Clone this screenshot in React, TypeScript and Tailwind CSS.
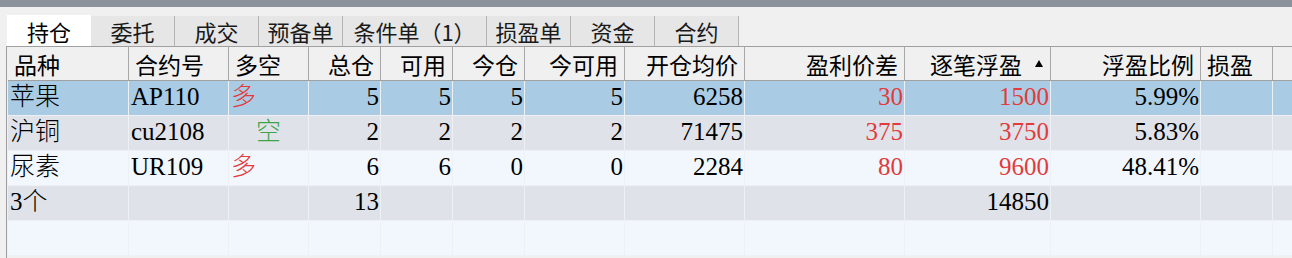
import React from "react";

type Align = "left" | "right" | "center";
const widths = [121, 100, 80, 72, 72, 72, 100, 120, 160, 146, 150, 72];
const headers: { t: string; a: Align; sort?: boolean }[] = [
  { t: "品种", a: "left" },
  { t: "合约号", a: "left" },
  { t: "多空", a: "left" },
  { t: "总仓", a: "right" },
  { t: "可用", a: "right" },
  { t: "今仓", a: "right" },
  { t: "今可用", a: "right" },
  { t: "开仓均价", a: "right" },
  { t: "盈利价差", a: "right" },
  { t: "逐笔浮盈", a: "right", sort: true },
  { t: "浮盈比例", a: "right" },
  { t: "损盈", a: "left" },
];

type Cell = { t: string; a: Align; c?: string };
const R = "text-[#e23b3b]";
const G = "text-[#3fa447]";

const rows: { bg: string; cells: Cell[] }[] = [
  {
    bg: "bg-[#a9cce4]",
    cells: [
      { t: "苹果", a: "left" },
      { t: "AP110", a: "left" },
      { t: "多", a: "left", c: R },
      { t: "5", a: "right" },
      { t: "5", a: "right" },
      { t: "5", a: "right" },
      { t: "5", a: "right" },
      { t: "6258", a: "right" },
      { t: "30", a: "right", c: R },
      { t: "1500", a: "right", c: R },
      { t: "5.99%", a: "right" },
      { t: "", a: "left" },
    ],
  },
  {
    bg: "bg-[#dfe3e9]",
    cells: [
      { t: "沪铜", a: "left" },
      { t: "cu2108", a: "left" },
      { t: "空", a: "center", c: G },
      { t: "2", a: "right" },
      { t: "2", a: "right" },
      { t: "2", a: "right" },
      { t: "2", a: "right" },
      { t: "71475", a: "right" },
      { t: "375", a: "right", c: R },
      { t: "3750", a: "right", c: R },
      { t: "5.83%", a: "right" },
      { t: "", a: "left" },
    ],
  },
  {
    bg: "bg-[#f2f7fd]",
    cells: [
      { t: "尿素", a: "left" },
      { t: "UR109", a: "left" },
      { t: "多", a: "left", c: R },
      { t: "6", a: "right" },
      { t: "6", a: "right" },
      { t: "0", a: "right" },
      { t: "0", a: "right" },
      { t: "2284", a: "right" },
      { t: "80", a: "right", c: R },
      { t: "9600", a: "right", c: R },
      { t: "48.41%", a: "right" },
      { t: "", a: "left" },
    ],
  },
  {
    bg: "bg-[#dfe3e9]",
    cells: [
      { t: "3个", a: "left" },
      { t: "", a: "left" },
      { t: "", a: "left" },
      { t: "13", a: "right" },
      { t: "", a: "left" },
      { t: "", a: "left" },
      { t: "", a: "left" },
      { t: "", a: "left" },
      { t: "", a: "left" },
      { t: "14850", a: "right" },
      { t: "", a: "left" },
      { t: "", a: "left" },
    ],
  },
  {
    bg: "bg-[#f2f7fd]",
    cells: widths.map(() => ({ t: "", a: "left" as Align })),
  },
];

const tabs = [
  { t: "持仓", w: 84 },
  { t: "委托", w: 84 },
  { t: "成交", w: 84 },
  { t: "预备单", w: 84 },
  { t: "条件单（1）", w: 144 },
  { t: "损盈单", w: 84 },
  { t: "资金", w: 84 },
  { t: "合约", w: 84 },
];

const sans = { fontFamily: '"Noto Sans CJK SC", "Noto Sans", sans-serif' };
const serif = { fontFamily: '"Liberation Serif", "Times New Roman", "Noto Sans CJK SC", serif' };

export default function App() {
  return (
    <div className="w-[1292px] h-[258px] overflow-hidden bg-[#f0f0f0] flex flex-col">
      <div className="h-[7px] bg-[#8b929b] shrink-0" />
      <div className="flex pl-[7px] pt-[8px] h-[39px] shrink-0 items-end" style={sans}>
        {tabs.map((tab, i) =>
          i === 0 ? (
            <div
              key={i}
              className="h-[31px] bg-white flex items-center justify-center text-[22px] leading-none text-black"
              style={{ width: tab.w }}
            >
              {tab.t}
            </div>
          ) : (
            <div
              key={i}
              className="h-[30px] bg-[#e6e6e6] border-r border-[#b4b4b4] flex items-center justify-center text-[22px] leading-none text-[#1a1a1a]"
              style={{ width: tab.w }}
            >
              {tab.t}
            </div>
          )
        )}
      </div>
      <div className="ml-[6px] border-l border-t border-[#a0a0a0] pl-[1px] bg-[#f0f0f0] flex-1 flex flex-col">
        <div className="flex h-[34px] border-b border-[#a0a0a0] bg-[#f0f0f0]" style={sans}>
          {headers.map((h, i) => (
            <div
              key={i}
              className={`h-full border-r border-[#a8a8a8] flex items-center text-[23px] leading-none text-black ${
                h.a === "right" ? "justify-end pr-[6px]" : "justify-start pl-[6px]"
              }`}
              style={{ width: widths[i] }}
            >
              <span className="pt-[2px]">{h.t}</span>
              {h.sort && (
                <svg width="8" height="7" viewBox="0 0 8 7" className="ml-[13px] mr-[1px]">
                  <polygon points="4,0 8,7 0,7" fill="#000" />
                </svg>
              )}
            </div>
          ))}
          <div className="flex-1" />
        </div>
        {rows.map((r, ri) => (
          <div key={ri} className={`flex h-[35px] border-b border-[#eef0f3] ${r.bg}`} style={serif}>
            {r.cells.map((c, ci) => (
              <div
                key={ci}
                className={`h-full border-r border-[#eef1f4] flex items-center text-[25px] leading-none font-light ${
                  c.c ?? "text-black"
                } ${
                  c.a === "right"
                    ? "justify-end pr-[1px]"
                    : c.a === "center"
                    ? "justify-center"
                    : "justify-start pl-[2px]"
                }`}
                style={{ width: widths[ci] }}
              >
                <span className="-mt-[3px]">{c.t}</span>
              </div>
            ))}
            <div className="flex-1" />
          </div>
        ))}
      </div>
    </div>
  );
}
